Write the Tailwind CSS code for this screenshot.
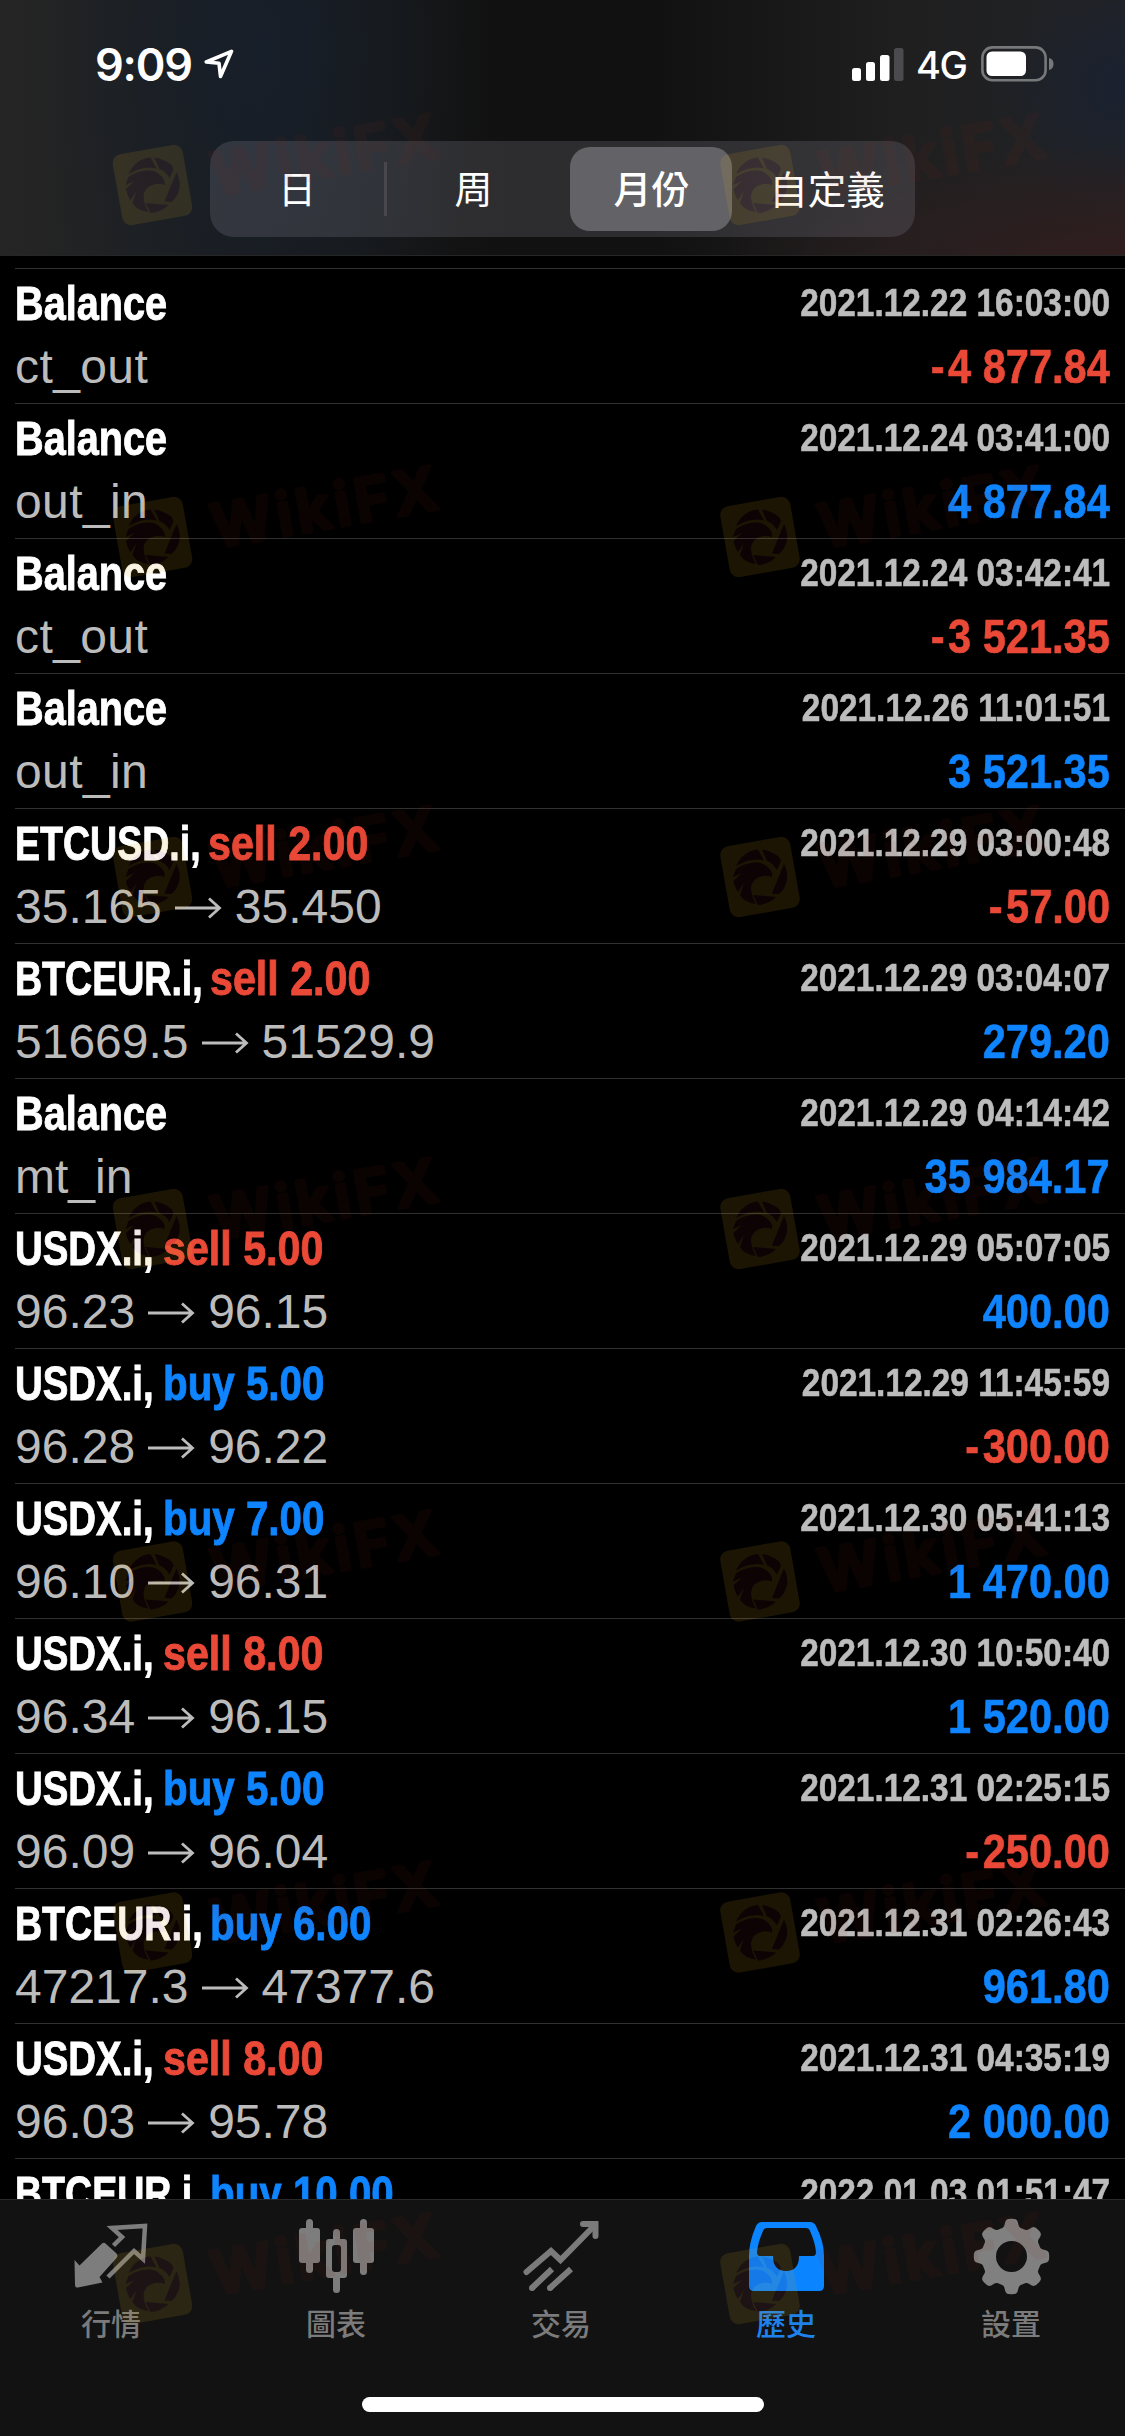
<!DOCTYPE html>
<html lang="zh-Hant">
<head>
<meta charset="utf-8">
<title>歷史</title>
<script src="https://cdn.jsdelivr.net/npm/@tailwindcss/browser@4"></script>
</head>
<body class="bg-black">
<div id="app" class="relative flex h-[2436px] w-[1125px] flex-col overflow-hidden bg-black text-white font-['Liberation_Sans','Noto_Sans_CJK_TC',sans-serif]">

  <header class="flex h-[256px] shrink-0 flex-col border-b border-[#262626] bg-[radial-gradient(ellipse_420px_110px_at_100%_100%,#301d1e_0%,#301d1e00_100%),radial-gradient(ellipse_140px_120px_at_100%_34%,#1a2130_0%,#1a213000_100%),radial-gradient(ellipse_220px_420px_at_260px_20%,#171f2a_0%,#171f2a00_100%),linear-gradient(90deg,#252525_0%,#202122_12%,#111111_45%,#111111_58%,#1f1f20_80%,#222325_100%)]">
    <div class="flex h-[128px] shrink-0 items-center justify-between pr-[71px] pl-[95px]">
      <div class="flex items-center">
        <span class="w-[109px] font-['Inter'] text-[45px] leading-none font-semibold tracking-[-1.2px]">9:09</span>
        <svg class="h-[30px] w-[30px]" viewBox="0 0 30 30" fill="none" stroke="#fff" stroke-width="3.600" stroke-linejoin="round"><path d="M27.500 2.300 L2.300 13 L15 14.200 L16.500 27.500 Z"/></svg>
      </div>
      <div class="flex items-center">
        <svg class="h-[33px] w-[52px]" viewBox="0 0 52 33"><g fill="#fff"><rect x="0" y="20" width="9" height="13" rx="2.500"/><rect x="14" y="14" width="9" height="19" rx="2.500"/><rect x="28" y="7" width="9.500" height="26" rx="2.500"/></g><rect x="42" y="0" width="9.500" height="33" rx="2.500" fill="#4b4b4d"/></svg>
        <span class="ml-[12px] w-[65px] pt-[2px] font-['Inter'] text-[38px] leading-none font-medium tracking-[-1.500px]">4G</span>
        <svg class="h-[36px] w-[73px]" viewBox="0 0 73 36"><rect x="1.400" y="1.400" width="63.200" height="32.800" rx="10" fill="none" stroke="#77787a" stroke-width="2.600"/><rect x="5.500" y="5.500" width="39.500" height="24.500" rx="5.500" fill="#fff"/><path d="M68 12 Q72.500 13 72.500 18 Q72.500 23 68 24 Z" fill="#77787a"/></svg>
      </div>
    </div>
    <nav class="mt-[13px] ml-[210px] flex h-[96px] w-[705px] shrink-0 items-center rounded-[24px] bg-[#76768047] text-center text-[38px]">
      <span class="w-[174px] pt-[3px]">日</span>
      <span class="h-[54px] w-[3px] bg-[#48484c]"></span>
      <span class="w-[173px] pt-[3px]">周</span>
      <span class="ml-[10px] flex h-[84px] w-[162px] items-center justify-center rounded-[20px] bg-[#636267] pt-[3px] pl-[1px] font-medium">月份</span>
      <span class="flex-1 pt-[3px] pl-[7px] text-[38.500px]">自定義</span>
    </nav>
  </header>

  <main class="min-h-0 flex-1 overflow-hidden pt-[12px]"><ul id="deals"></ul></main>

  <footer class="flex h-[237px] shrink-0 flex-col items-center border-t border-[#2a2a2a] bg-[#121212]">
    <nav class="-ml-[3px] grid w-[1125px] shrink-0 grid-cols-5 text-center text-[30px] leading-[36px] font-medium text-[#7b7b7b]">
      <span class="flex flex-col items-center">
        <svg class="mb-[3px] h-[104px] w-[90px]" viewBox="0 0 90 104" fill="#7d7d7d"><path d="M36 43.500 Q38 42 40 44 L50 53 Q52.500 55.500 50.500 58 L33.500 77 L36.500 82.500 L12 87.500 Q9 88 9 85 L8.500 60 L13.500 65.500 Z"/><path d="M47.500 45.500 L56 37 L46 28 L79 26 L77 59 L68 51 L42 77" fill="none" stroke="#7d7d7d" stroke-width="4.500"/></svg>行情</span>
      <span class="flex flex-col items-center">
        <svg class="mb-[3px] h-[104px] w-[90px]" viewBox="0 0 90 104" fill="#7d7d7d"><rect x="8" y="28" width="21" height="35" rx="3"/><rect x="15" y="19" width="7" height="54" rx="3.500"/><rect x="62" y="28" width="21" height="35" rx="3"/><rect x="69" y="19" width="7" height="56" rx="3.500"/><rect x="42" y="29" width="7" height="14" rx="3.500"/><rect x="42" y="74" width="7" height="19" rx="3.500"/><path fill-rule="evenodd" d="M38 39 H53 Q56 39 56 42 V75 Q56 78 53 78 H38 Q35 78 35 75 V42 Q35 39 38 39 Z M44 45 Q41 45 41 48 V69 Q41 72 44 72 H47 Q50 72 50 69 V48 Q50 45 47 45 Z"/></svg>圖表</span>
      <span class="flex flex-col items-center">
        <svg class="mb-[3px] h-[104px] w-[90px]" viewBox="0 0 90 104" fill="none" stroke="#7b7b7b" stroke-width="6"><g stroke-linecap="round"><path d="M10.500 72 L35 51 L44.500 60 L78 26"/><path d="M67 24 H79.500 V36"/><path d="M16 88 h.1 M34 88 h.1"/></g><path d="M16 88 L36 69 M34 88 L55 69"/></svg>交易</span>
      <span class="flex flex-col items-center text-[#1f82ea]">
        <svg class="mb-[3px] h-[104px] w-[90px]" viewBox="0 0 90 104" fill="#0a84ff"><path fill-rule="evenodd" d="M21 22 H69 Q73 22 75 26 Q83 42 83 56 V86 Q83 91 78 91 H13 Q8 91 8 86 V56 Q8 42 15 26 Q17 22 21 22 Z M26 28 Q23 28 22 31 Q17 42 16 52 Q16 56 19 56 H32 Q32 71 45 71 Q58 71 58 56 H72 Q75 56 75 52 Q74 42 69 31 Q68 28 65 28 Z"/></svg>歷史</span>
      <span class="flex flex-col items-center">
        <svg class="mb-[3px] h-[104px] w-[90px]" viewBox="0 0 90 104"><path id="gear" fill="#808080" fill-rule="evenodd"/></svg>設置</span>
    </nav>
    <div class="mt-[54px] h-[15px] w-[402px] rounded-full bg-white"></div>
  </footer>

  <svg class="pointer-events-none absolute inset-0 h-[2436px] w-[1125px]" viewBox="0 0 1125 2436">
    <defs>
      <g id="bird" transform="rotate(10)">
        <path d="M-24 -11 Q-17 -26 -2 -27.500 L4 -16.500 Q-8 -20 -24 -11 Z"/>
        <path d="M2 -27.500 Q12 -26 19 -20 L21 -16 L17 -7 Q13 -14 7 -16 Z"/>
        <path d="M24 -13 Q28 -5 27 3 Q25 12 19 17 L12 16.500 Z"/>
        <path d="M16 20 Q9 27 -2 28 L-7 18 Z"/>
        <path d="M-24 -8 Q-14 -15 -3 -14.500 Q7 -14 12 -4 L12 0 Q7 -2 3 -1 Q-8 1 -9 11 Q-9 19 -4 27 Q-15 26 -20 18 L-16 6 L-22 15 Q-25 11 -26.500 4 L-18 -4 L-27 0 Z"/>
      </g>
      <mask id="cut" maskUnits="userSpaceOnUse" x="-50" y="-50" width="100" height="100"><rect x="-50" y="-50" width="100" height="100" fill="#fff"/><use href="#bird" fill="#000"/></mask>
      <g id="mark" transform="rotate(-10)">
        <rect x="-35.500" y="-36" width="71" height="72" rx="9" fill="#e0aa20" opacity=".12" mask="url(#cut)"/>
        <use href="#bird" fill="#80242c" opacity=".1"/>
        <text x="60" y="22" textLength="228" font-family="Inter" font-weight="600" font-size="60" fill="#902814" stroke="#902814" stroke-width="4" stroke-linejoin="round" opacity=".075">WikiFX</text>
      </g>
    </defs>
    <g id="marks"></g>
  </svg>
</div>
<script>
const deals = [
  ['Balance', '', '', 'ct_out', '', '2021.12.22 16:03:00', '-4 877.84'],
  ['Balance', '', '', 'out_in', '', '2021.12.24 03:41:00', '4 877.84'],
  ['Balance', '', '', 'ct_out', '', '2021.12.24 03:42:41', '-3 521.35'],
  ['Balance', '', '', 'out_in', '', '2021.12.26 11:01:51', '3 521.35'],
  ['ETCUSD.i,', 'sell', '2.00', '35.165', '35.450', '2021.12.29 03:00:48', '-57.00'],
  ['BTCEUR.i,', 'sell', '2.00', '51669.5', '51529.9', '2021.12.29 03:04:07', '279.20'],
  ['Balance', '', '', 'mt_in', '', '2021.12.29 04:14:42', '35 984.17'],
  ['USDX.i,', 'sell', '5.00', '96.23', '96.15', '2021.12.29 05:07:05', '400.00'],
  ['USDX.i,', 'buy', '5.00', '96.28', '96.22', '2021.12.29 11:45:59', '-300.00'],
  ['USDX.i,', 'buy', '7.00', '96.10', '96.31', '2021.12.30 05:41:13', '1 470.00'],
  ['USDX.i,', 'sell', '8.00', '96.34', '96.15', '2021.12.30 10:50:40', '1 520.00'],
  ['USDX.i,', 'buy', '5.00', '96.09', '96.04', '2021.12.31 02:25:15', '-250.00'],
  ['BTCEUR.i,', 'buy', '6.00', '47217.3', '47377.6', '2021.12.31 02:26:43', '961.80'],
  ['USDX.i,', 'sell', '8.00', '96.03', '95.78', '2021.12.31 04:35:19', '2 000.00'],
  ['BTCEUR.i,', 'buy', '10.00', '', '', '2022.01.03 01:51:47', ''],
];
// Column width and horizontal condensing of each symbol name
const names = { 'Balance': [152, .826], 'ETCUSD.i,': [193, .782], 'BTCEUR.i,': [195, .782], 'USDX.i,': [147.5, .8] };
const arrow = '<svg class="mt-[2px] mr-[13px] ml-[13px] h-[22px] w-[47px]" viewBox="0 0 47 22" fill="none" stroke="#bcbcbc" stroke-width="2.800"><path d="M0 11 H44 M34 1.500 L44.500 11 L34 20.500"/></svg>';
document.getElementById('deals').innerHTML = deals.map(([name, side, lots, from, to, time, sum]) => `
  <li class="ml-[15px] flex h-[135px] justify-between border-t border-[#303030] pr-[15px]">
    <div class="flex flex-col">
      <div class="mt-[7px] flex h-[56px] text-[48px] leading-[56px] font-bold whitespace-pre [-webkit-text-stroke:0.9px]">
        <span class="block origin-left" style="width:${names[name][0]}px;transform:scaleX(${names[name][1]})">${name}</span>${side ? `<span class="block origin-left ${side === 'sell' ? 'scale-x-[0.858] text-[#eb4938]' : 'scale-x-[0.84] text-[#0f84ff]'}">${side} ${lots}</span>` : ''}
      </div>
      <div class="mt-[7px] flex h-[56px] items-center text-[48px] leading-[56px] text-[#bcbcbc] ${from === 'mt_in' || to ? '' : 'tracking-[0.4px]'}">${from}${to ? arrow + to : ''}</div>
    </div>
    <div class="flex flex-col items-end font-bold whitespace-pre [-webkit-text-stroke:0.6px]">
      <div class="mt-[6px] h-[56px] origin-right scale-x-[0.856] text-[39px] leading-[56px] text-[#bcbcbc]">${time}</div>
      <div class="mt-[8px] h-[56px] origin-right scale-x-[0.866] text-[48px] leading-[56px] ${sum.startsWith('-') ? 'text-[#eb4938] first-letter:tracking-[4px]' : 'text-[#0f84ff]'}">${sum.startsWith('-') ? `<span class="tracking-[3px]">-</span>${sum.slice(1)}` : sum}</div>
    </div>
  </li>`.replace(/>\s+</g, '><')).join('');

document.getElementById('marks').innerHTML = [185, 537, 877, 1229, 1581.5, 1932.5, 2284].map(y =>
  [152.5, 760].map(x => `<use href="#mark" transform="translate(${x} ${y})"/>`).join('')).join('');

// Eight-toothed gear outline
const pts = [];
for (let i = 0; i < 360; i++) {
  const a = i * Math.PI / 180;
  const r = 33.8 + 4 * Math.tanh(2.2 * Math.cos(8 * a));
  pts.push(`${(45.5 + r * Math.cos(a)).toFixed(2)} ${(56.5 + r * Math.sin(a)).toFixed(2)}`);
}
document.getElementById('gear').setAttribute('d', 'M' + pts.join('L') + 'Z M61 56.5 A15.5 15.5 0 1 0 30 56.5 A15.5 15.5 0 1 0 61 56.5 Z');
</script>
</body>
</html>
